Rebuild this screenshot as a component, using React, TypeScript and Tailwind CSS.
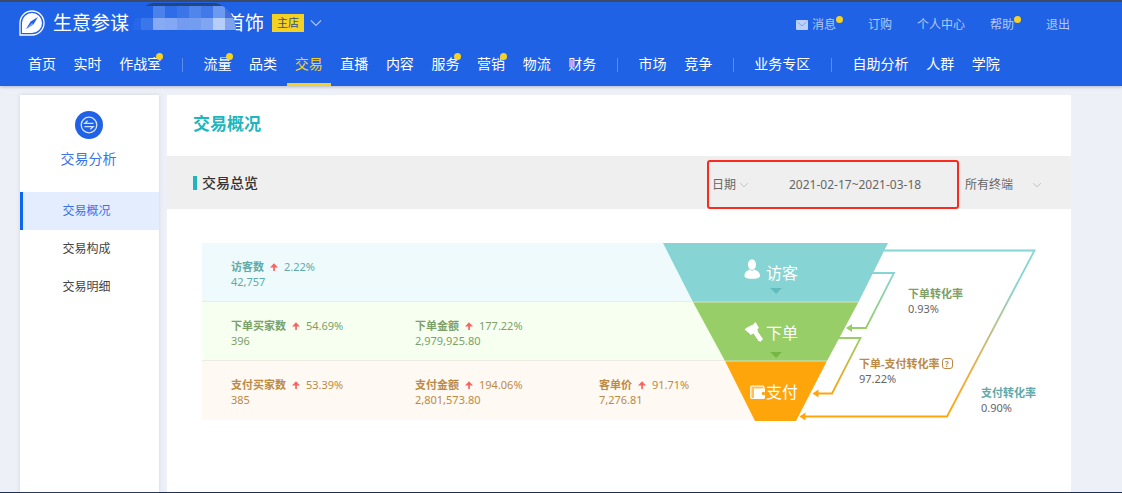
import type { ReactNode } from "react";

const FONT = "font-['Noto_Sans','Noto_Sans_CJK_SC',sans-serif]";

type NavItem = { label: string; dot?: boolean; active?: boolean };

const NAV_GROUPS: NavItem[][] = [
  [{ label: "首页" }, { label: "实时" }, { label: "作战室", dot: true }],
  [
    { label: "流量", dot: true },
    { label: "品类" },
    { label: "交易", active: true },
    { label: "直播" },
    { label: "内容" },
    { label: "服务", dot: true },
    { label: "营销", dot: true },
    { label: "物流" },
    { label: "财务" },
  ],
  [{ label: "市场" }, { label: "竞争" }],
  [{ label: "业务专区" }],
  [{ label: "自助分析" }, { label: "人群" }, { label: "学院" }],
];

const SIDE_ITEMS = ["交易概况", "交易构成", "交易明细"];

type Metric = { label: string; change: string; value: string };

const ROWS: { tone: string; metrics: Metric[] }[] = [
  {
    tone: "bg-[#eefafb] text-[#62aaa9] border-[#e6eceb]",
    metrics: [{ label: "访客数", change: "2.22%", value: "42,757" }],
  },
  {
    tone: "bg-[#f6fff0] text-[#7d9f68] border-[#ebece4]",
    metrics: [
      { label: "下单买家数", change: "54.69%", value: "396" },
      { label: "下单金额", change: "177.22%", value: "2,979,925.80" },
    ],
  },
  {
    tone: "bg-[#fff9f3] text-[#bd8a45] border-[#fff9f3]",
    metrics: [
      { label: "支付买家数", change: "53.39%", value: "385" },
      { label: "支付金额", change: "194.06%", value: "2,801,573.80" },
      { label: "客单价", change: "91.71%", value: "7,276.81" },
    ],
  },
];

function Logo() {
  return (
    <svg viewBox="0 0 26 26" className="size-[26px]" aria-hidden="true">
      <path d="M1 25V13A12 12 0 1 1 13 25Z" fill="none" stroke="#fff" strokeWidth="1.3" />
      <path d="M3 23V13A10 10 0 1 1 13 23Z" fill="#fff" />
      <path d="M19 7 14.400 14.400 7 19 11.600 11.600Z" fill="#2062e6" />
      <path d="M7 19 14.400 14.400 13 13Z" fill="#7ea6f2" />
    </svg>
  );
}

function Chevron({ className }: { className: string }) {
  return (
    <svg viewBox="0 0 12 8" className={className} fill="none" stroke="currentColor" aria-hidden="true">
      <path d="M1 1.5 6 6.5 11 1.5" strokeWidth="1.2" />
    </svg>
  );
}

const MASK_CELLS: [number, number, string][] = [
  [20, 6, "#4b81eb"], [32, 6, "#2f6ce7"], [44, 6, "#3b75e8"], [56, 6, "#5086eb"],
  [68, 6, "#4178ea"], [80, 6, "#6b9af0"], [92, 6, "#3f70dc"],
  [-4, 18, "#2868e8"], [8, 18, "#3b77ea"], [20, 18, "#86aaf3"], [32, 18, "#84a8f3"],
  [44, 18, "#739bef"], [56, 18, "#759def"], [68, 18, "#80a5f2"], [80, 18, "#b5cdf9"],
  [92, 18, "#7fa2ee"],
];

function NameMask() {
  return (
    <svg viewBox="0 0 104 44" className="absolute -top-0.5 left-[133px] h-11 w-[104px]" aria-hidden="true">
      <clipPath id="mask">
        <path d="M0 30C0 18 8 5 20 3H82C94 5 103 18 103 30V44H0Z" />
      </clipPath>
      <g clipPath="url(#mask)">
        <rect width="104" height="44" fill="#2062e6" />
        <rect y="2" width="104" height="4" fill="#24467f" />
        {MASK_CELLS.map(([x, y, fill]) => (
          <rect key={`${x}-${y}`} x={x} y={y} width="12" height="12" fill={fill} />
        ))}
      </g>
    </svg>
  );
}

function TopLink({ children, dot }: { children: ReactNode; dot?: boolean }) {
  return (
    <a href="#" className="flex items-center">
      {children}
      {dot && <i className="mb-3 size-[7px] rounded-full bg-[#f5d124]" />}
    </a>
  );
}

function Header() {
  return (
    <header className="relative z-10 border-t-2 border-[#3d4a66] bg-[#2062e6] text-white shadow-[0_1px_3px_rgba(60,80,120,0.35)]">
      <div className="flex h-[42px] items-center justify-between pr-[52px] pl-[19px]">
        <div className="flex items-center">
          <Logo />
          <span className="ml-2 text-[19px] leading-6">生意参谋</span>
          <span className="ml-[97px] text-[19px] leading-6">首饰</span>
          <span className="ml-2 bg-[#f5d124] px-[5px] text-[11px] leading-[18px] text-[#38507c]">主店</span>
          <button type="button" aria-label="切换店铺" className="ml-[6px] text-[#a9c3f5]">
            <Chevron className="h-2 w-3" />
          </button>
        </div>
        <div className="flex items-center gap-[25px] pt-1 text-[12px] leading-5 text-[#b3c9f6]">
          <TopLink dot>
            <svg viewBox="0 0 12 10" className="mr-1 h-[10px] w-3" aria-hidden="true">
              <rect width="12" height="10" rx="1" fill="#bdd0f8" />
              <path d="M1.5 2 6 6 10.5 2" fill="none" stroke="#7ea4f0" />
            </svg>
            消息
          </TopLink>
          <TopLink>订购</TopLink>
          <TopLink>个人中心</TopLink>
          <TopLink dot>帮助</TopLink>
          <TopLink>退出</TopLink>
        </div>
      </div>
      <NameMask />
      <nav className="ml-7 flex max-w-[972px] justify-between text-[14px]">
        {NAV_GROUPS.map((group, g) => [
          g > 0 && <i key={`s${g}`} className="mx-[3px] mt-[14px] h-[14px] w-px bg-[#5c8cee]" />,
          ...group.map((item) => (
            <a
              key={item.label}
              href="#"
              className={`relative h-[42px] leading-10 whitespace-nowrap ${item.active ? "text-[#f5d124]" : ""}`}
            >
              {item.label}
              {item.dot && <i className="absolute top-[9px] -right-0.5 size-[7px] rounded-full bg-[#f5d124]" />}
              {item.active && <i className="absolute -inset-x-2 bottom-0 h-[3px] bg-[#f5d124]" />}
            </a>
          )),
        ])}
      </nav>
    </header>
  );
}

function Sidebar() {
  return (
    <aside className="w-[139px] shrink-0 bg-white pt-4 text-center shadow-[0_0_4px_rgba(120,140,180,0.25)]">
      <div className="pr-[2px]">
        <svg viewBox="0 0 28 28" className="mx-auto size-7" aria-hidden="true">
          <circle cx="14" cy="14" r="14" fill="#2062e6" />
          <g fill="none" stroke="#d5e2fb" strokeWidth="1.3">
            <circle cx="14" cy="14" r="7.8" />
            <path d="M18.500 12.400H9.800L12.600 9.800M9.500 15.600H18.200L15.400 18.200" />
          </g>
        </svg>
        <h2 className="mt-[9px] mb-[22px] text-[14px] leading-[22px] text-[#3a73e8]">交易分析</h2>
      </div>
      <ul className="text-[12px] leading-[38px] text-[#444]">
        {SIDE_ITEMS.map((label, i) => (
          <li key={label}>
            <a
              href="#"
              className={`block border-l-3 pr-[9px] ${
                i === 0 ? "border-[#0b65ee] bg-[#e4edfd] text-[#3a73e8]" : "border-transparent"
              }`}
            >
              {label}
            </a>
          </li>
        ))}
      </ul>
    </aside>
  );
}

function UpArrow() {
  return (
    <svg viewBox="0 0 8 8" className="h-2 w-2" aria-hidden="true">
      <path d="M4 .3 8 4.600H4.900V8H3.200V4.600H0Z" fill="#fb6363" />
    </svg>
  );
}

function MetricRow({ tone, metrics }: { tone: string; metrics: Metric[] }) {
  return (
    <div className={`flex h-[59px] border-b pt-4 pl-[29px] text-[11px] leading-[15px] ${tone}`}>
      {metrics.map((m) => (
        <dl key={m.label} className="w-[184px] shrink-0">
          <dt className="flex items-center gap-[6px]">
            <b>{m.label}</b>
            <UpArrow />
            <span>{m.change}</span>
          </dt>
          <dd>{m.value}</dd>
        </dl>
      ))}
    </div>
  );
}

function Rate({ place, tone, label, value, help }: {
  place: string; tone: string; label: string; value: string; help?: boolean;
}) {
  return (
    <dl className={`absolute text-[11px] leading-[15px] whitespace-nowrap ${place}`}>
      <dt className={`flex items-center gap-[2px] font-bold ${tone}`}>
        {label}
        {help && (
          <button type="button" className="size-[11px] rounded-[3px] border border-current text-[8px] leading-[9px]">
            ?
          </button>
        )}
      </dt>
      <dd className="text-[#666]">{value}</dd>
    </dl>
  );
}

function Funnel() {
  return (
    <div className="relative h-[178px] w-[374px] shrink-0 text-[16px] leading-6 text-white">
      <svg viewBox="0 0 374 178" className="h-full w-full" aria-hidden="true">
        <defs>
          <linearGradient id="all" gradientUnits="userSpaceOnUse" x1="0" y1="8" x2="0" y2="174">
            <stop offset="0" stopColor="#86d4d3" />
            <stop offset=".2" stopColor="#86d4d3" />
            <stop offset=".75" stopColor="#f0ae3c" />
            <stop offset="1" stopColor="#ffa50c" />
          </linearGradient>
          <linearGradient id="order" gradientUnits="userSpaceOnUse" x1="0" y1="30" x2="0" y2="85">
            <stop offset="0" stopColor="#86d4d3" />
            <stop offset="1" stopColor="#98ce68" />
          </linearGradient>
          <linearGradient id="pay" gradientUnits="userSpaceOnUse" x1="0" y1="95" x2="0" y2="150">
            <stop offset="0" stopColor="#98ce68" />
            <stop offset="1" stopColor="#ffa50c" />
          </linearGradient>
        </defs>
        <g fill="none" strokeWidth="1.8">
          <path d="M218 7.5H371.5L284 173.5H142" stroke="url(#all)" />
          <path d="M208 30H231L203 85H188" stroke="url(#order)" />
          <path d="M174 95H197.5L169 150.5H154" stroke="url(#pay)" />
        </g>
        <path d="M183 85 189 81V89Z" fill="#98ce68" />
        <path d="M149.500 150.500 155.500 146.500V154.500Z" fill="#ffa50c" />
        <path d="M136.500 173.500 142.500 169.500V177.500Z" fill="#ffa50c" />
        <path d="M0 0H225L195.500 59H30Z" fill="#86d4d3" />
        <path d="M30 59H195.500L164 118H62Z" fill="#98ce68" />
        <path d="M62 118H164L133 178H92Z" fill="#ffa50c" />
        <path d="M30 59H195.500M62 118H164" stroke="#e4ead8" strokeOpacity=".8" />
        <path d="M107 45H119L113 51Z" fill="#62bcbc" />
        <path d="M107 109H119L113 115Z" fill="#76b547" />
        <g fill="#fff">
          <ellipse cx="89" cy="21.500" rx="4" ry="5.300" />
          <path d="M81.500 33C81.500 29 84 27.500 86.500 26.500 88 28 90 28 91.500 26.500 94 27.500 97 29 97 33 97 36.800 81.500 36.800 81.500 33Z" />
          <path d="M81.500 86.500 84 84.500 90 81.500 92.500 79 96 85 94.500 86 95 89 100 96 97.500 98.800 95.500 98 90.500 90.500 87.500 92 86.500 90.500Z" />
        </g>
        <rect x="87.800" y="143" width="13" height="12.500" rx="1" fill="#fff" fillOpacity=".3" stroke="#fff" strokeWidth="1.2" />
        <path d="M90.500 145.500H102V155.500H90.500Z" fill="#fff" />
        <path d="M90.500 145.500V155" stroke="#ffc052" />
        <circle cx="100.500" cy="150.500" r="1.700" fill="#ffa50c" />
      </svg>
      <span className="absolute top-[18px] left-[103px]">访客</span>
      <span className="absolute top-[78px] left-[103px]">下单</span>
      <span className="absolute top-[137px] left-[103px]">支付</span>
      <Rate place="top-[43px] left-[245px]" tone="text-[#7d9f68]" label="下单转化率" value="0.93%" />
      <Rate place="top-[113px] left-[196px]" tone="text-[#bd8a45]" label="下单-支付转化率" value="97.22%" help />
      <Rate place="top-[142px] left-[318px]" tone="text-[#62aaa9]" label="支付转化率" value="0.90%" />
    </div>
  );
}

export default function App() {
  return (
    <div className={`flex min-h-screen flex-col border-b border-[#1e2f55] bg-[#edf0f6] ${FONT}`}>
      <Header />
      <div className="flex grow gap-2 pt-[9px] pr-[51px] pl-5">
        <Sidebar />
        <main className="min-w-0 grow bg-white">
          <h1 className="pt-[15px] pb-[18px] pl-[26px] text-[17px] leading-7 font-bold text-[#22b5bd]">交易概况</h1>
          <section>
            <div className="flex h-[53px] items-center justify-between bg-[#efefef] pr-[29px] pl-[26px]">
              <h2 className="flex items-center gap-[5px] text-[14px] leading-5 font-medium text-[#333]">
                <i className="h-[14px] w-1 bg-[#22b5bd]" />
                交易总览
              </h2>
              <div className="flex items-center self-end text-[12px] text-[#666]">
                <div className="flex h-[49px] w-[252px] items-center rounded-[3px] border-2 border-[#fb2a1e] pl-[3px]">
                  <label className="flex items-center gap-[3px]">
                    <select aria-label="日期" className="w-6 appearance-none">
                      <option>日期</option>
                    </select>
                    <Chevron className="h-[6px] w-[10px] text-[#bbb]" />
                  </label>
                  <button type="button" className="ml-10">2021-02-17~2021-03-18</button>
                </div>
                <label className="flex items-center gap-[18px] pl-[6px]">
                  <select aria-label="终端" className="w-[49px] appearance-none">
                    <option>所有终端</option>
                  </select>
                  <Chevron className="h-[6px] w-[10px] text-[#bbb]" />
                </label>
              </div>
            </div>
            <div className="flex pt-[34px] pr-[34px] pl-[35px]">
              <div className="-mr-[92px] min-w-0 grow">
                {ROWS.map((row) => (
                  <MetricRow key={row.metrics[0].label} {...row} />
                ))}
              </div>
              <Funnel />
            </div>
          </section>
        </main>
      </div>
    </div>
  );
}
